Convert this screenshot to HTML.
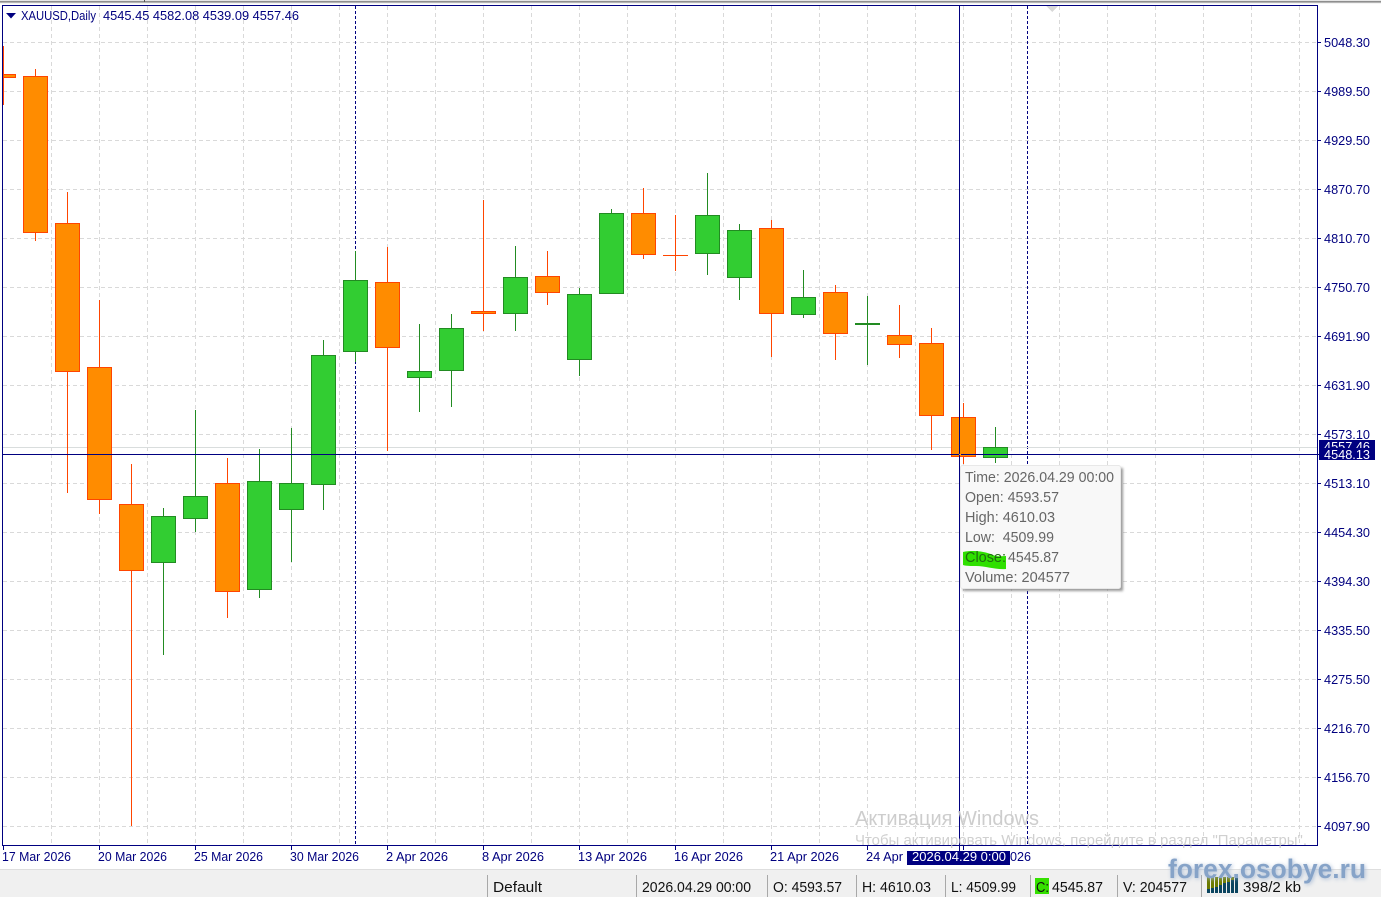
<!DOCTYPE html>
<html>
<head>
<meta charset="utf-8">
<title>XAUUSD,Daily</title>
<style>
html,body{margin:0;padding:0;background:#fff;width:1381px;height:897px;overflow:hidden}
svg{display:block;position:absolute;left:0;top:0}
text{font-family:"Liberation Sans",sans-serif;white-space:pre}
.ax{font-size:13px;fill:#00007f}
.st{font-size:15px;fill:#111}
.tt{font-size:15px;fill:#666}
.grid path{stroke:#d9d9d9;stroke-width:1;fill:none;stroke-dasharray:4 3}
.o rect{fill:#ff8c00;stroke:#ff4500}
.g rect{fill:#32cd32;stroke:#228b22}
.o path{stroke:#ff4500;fill:none}
.g path{stroke:#228b22;fill:none}
.crisp{shape-rendering:crispEdges}
</style>
</head>
<body>
<svg width="1381" height="897" viewBox="0 0 1381 897" xmlns="http://www.w3.org/2000/svg">
<defs>
<filter id="wm" x="-5%" y="-40%" width="110%" height="180%">
<feGaussianBlur in="SourceAlpha" stdDeviation="2" result="b"/>
<feFlood flood-color="#a9bcd6" flood-opacity="1"/>
<feComposite in2="b" operator="in" result="s"/>
<feOffset in="s" dx="1" dy="1" result="so"/>
<feMerge><feMergeNode in="so"/><feMergeNode in="SourceGraphic"/></feMerge>
</filter>
<filter id="ts" x="-5%" y="-5%" width="115%" height="115%">
<feGaussianBlur stdDeviation="1.2"/>
</filter>
</defs>

<!-- top band -->
<g class="crisp">
<rect x="0" y="0" width="1381" height="1" fill="#e6e6e6"/>
<rect x="0" y="1" width="1381" height="1" fill="#8e8e8e"/>
<rect x="0" y="2" width="1381" height="1" fill="#b4b4b4"/>
<rect x="0" y="3" width="1381" height="1" fill="#f4f4f4"/>
<rect x="144" y="0" width="1" height="2" fill="#555"/>

<!-- grid -->
<g class="grid">
<path d="M3 42.5H1317M3 91.5H1317M3 140.5H1317M3 189.5H1317M3 238.5H1317M3 287.5H1317M3 336.5H1317M3 385.5H1317M3 434.5H1317M3 483.5H1317M3 532.5H1317M3 581.5H1317M3 630.5H1317M3 679.5H1317M3 728.5H1317M3 777.5H1317M3 826.5H1317"/>
<path d="M51.5 6V845M99.5 6V845M147.5 6V845M195.5 6V845M243.5 6V845M291.5 6V845M339.5 6V845M387.5 6V845M435.5 6V845M483.5 6V845M531.5 6V845M579.5 6V845M627.5 6V845M675.5 6V845M723.5 6V845M771.5 6V845M819.5 6V845M867.5 6V845M915.5 6V845M963.5 6V845M1011.5 6V845M1059.5 6V845M1107.5 6V845M1155.5 6V845M1203.5 6V845M1251.5 6V845M1299.5 6V845"/>
</g>

<!-- period separators -->
<path d="M355.5 6V845M1027.5 6V845" stroke="#000080" stroke-dasharray="3 2" fill="none"/>

<!-- chart shift triangle -->
<polygon points="1046,6 1058,6 1052,12" fill="#d8d8d8"/>

<!-- ask/bid line -->
<rect x="3" y="447" width="1314" height="1" fill="#d9dddd"/>

<!-- bearish candles -->
<g class="o">
<path d="M3.5 46V105M35.5 69V241M67.5 192V493M99.5 300V514M131.5 464V826M227.5 458V618M387.5 247V451M483.5 200V331M547.5 251V305M643.5 188V259M675.5 215V271M771.5 220V357M835.5 285V360M899.5 305V358M931.5 328V450M963.5 403V464"/>
<rect x="3.5" y="74.5" width="12" height="3"/>
<rect x="23.5" y="76.5" width="24" height="156"/>
<rect x="55.5" y="223.5" width="24" height="148"/>
<rect x="87.5" y="367.5" width="24" height="132"/>
<rect x="119.5" y="504.5" width="24" height="66"/>
<rect x="215.5" y="483.5" width="24" height="108"/>
<rect x="375.5" y="282.5" width="24" height="65"/>
<rect x="471.5" y="311.5" width="24" height="2"/>
<rect x="535.5" y="276.5" width="24" height="16"/>
<rect x="631.5" y="213.5" width="24" height="41"/>
<path d="M663 255.5H688"/>
<rect x="759.5" y="228.5" width="24" height="85"/>
<rect x="823.5" y="292.5" width="24" height="41"/>
<rect x="887.5" y="335.5" width="24" height="9"/>
<rect x="919.5" y="343.5" width="24" height="72"/>
<rect x="951.5" y="417.5" width="24" height="39"/>
</g>

<!-- bullish candles -->
<g class="g">
<path d="M163.5 508V655M195.5 410V532M259.5 449V598M291.5 428V562M323.5 340V510M355.5 251V362M419.5 324V412M451.5 314V407M515.5 246V331M579.5 288V376M611.5 209V293M707.5 173V275M739.5 224V300M803.5 270V318M867.5 296V365M995.5 427V463"/>
<rect x="151.5" y="516.5" width="24" height="46"/>
<rect x="183.5" y="496.5" width="24" height="22"/>
<rect x="247.5" y="481.5" width="24" height="108"/>
<rect x="279.5" y="483.5" width="24" height="26"/>
<rect x="311.5" y="355.5" width="24" height="129"/>
<rect x="343.5" y="280.5" width="24" height="71"/>
<rect x="407.5" y="371.5" width="24" height="6"/>
<rect x="439.5" y="328.5" width="24" height="42"/>
<rect x="503.5" y="277.5" width="24" height="36"/>
<rect x="567.5" y="294.5" width="24" height="65"/>
<rect x="599.5" y="213.5" width="24" height="80"/>
<rect x="695.5" y="215.5" width="24" height="38"/>
<rect x="727.5" y="230.5" width="24" height="47"/>
<rect x="791.5" y="297.5" width="24" height="17"/>
<path d="M855 323.5H880M855 324.5H880"/>
<rect x="983.5" y="447.5" width="24" height="10"/>
</g>

<!-- crosshair -->
<path d="M959.5 6V851M3 454.5H1319" stroke="#000080" fill="none"/>
<rect x="959" y="454" width="2" height="1" fill="#ff9a20"/>

<!-- frame -->
<path d="M2.5 5.5H1317.5V845.5H2.5Z" stroke="#000080" fill="none"/>
<!-- price ticks -->
<path d="M1318 42.5h3M1318 91.5h3M1318 140.5h3M1318 189.5h3M1318 238.5h3M1318 287.5h3M1318 336.5h3M1318 385.5h3M1318 434.5h3M1318 483.5h3M1318 532.5h3M1318 581.5h3M1318 630.5h3M1318 679.5h3M1318 728.5h3M1318 777.5h3M1318 826.5h3" stroke="#000080" fill="none"/>
<!-- time ticks -->
<path d="M3.5 846v4M99.5 846v4M195.5 846v4M291.5 846v4M387.5 846v4M483.5 846v4M579.5 846v4M675.5 846v4M771.5 846v4M867.5 846v4M963.5 846v4" stroke="#000080" fill="none"/>

<!-- status bar -->
<rect x="0" y="869" width="1381" height="1" fill="#dedede"/>
<rect x="0" y="870" width="1381" height="27" fill="#f0f0f0"/>
<path d="M487.5 875V897M636.5 875V897M767.5 875V897M856.5 875V897M945.5 875V897M1030.5 875V897M1117.5 875V897M1201.5 875V897" stroke="#a8a8a8" fill="none"/>
<rect x="1035" y="878" width="14" height="16" fill="#35e000"/>
<!-- status icon -->
<g fill="#6b7a00">
<rect x="1207" y="877" width="3" height="12"/><rect x="1211" y="877" width="3" height="11"/><rect x="1215" y="877" width="3" height="10"/><rect x="1219" y="877" width="3" height="8"/><rect x="1223" y="877" width="3" height="6"/><rect x="1227" y="877" width="3" height="5"/><rect x="1231" y="877" width="3" height="3"/><rect x="1235" y="877" width="3" height="1"/>
</g>
<g fill="#0b4560">
<rect x="1207" y="889" width="3" height="4"/><rect x="1211" y="888" width="3" height="5"/><rect x="1215" y="887" width="3" height="6"/><rect x="1219" y="885" width="3" height="8"/><rect x="1223" y="883" width="3" height="10"/><rect x="1227" y="882" width="3" height="11"/><rect x="1231" y="880" width="3" height="13"/><rect x="1235" y="878" width="3" height="15"/>
</g>
</g>

<!-- header -->
<polygon points="6,13 16,13 11,18.5" fill="#000080"/>
<text x="21" y="20" class="ax" textLength="75" lengthAdjust="spacingAndGlyphs">XAUUSD,Daily</text>
<text x="103" y="20" class="ax" textLength="196" lengthAdjust="spacingAndGlyphs">4545.45 4582.08 4539.09 4557.46</text>

<!-- price labels -->
<g class="ax">
<text x="1324" y="47" textLength="46" lengthAdjust="spacingAndGlyphs">5048.30</text>
<text x="1324" y="96" textLength="46" lengthAdjust="spacingAndGlyphs">4989.50</text>
<text x="1324" y="145" textLength="46" lengthAdjust="spacingAndGlyphs">4929.50</text>
<text x="1324" y="194" textLength="46" lengthAdjust="spacingAndGlyphs">4870.70</text>
<text x="1324" y="243" textLength="46" lengthAdjust="spacingAndGlyphs">4810.70</text>
<text x="1324" y="292" textLength="46" lengthAdjust="spacingAndGlyphs">4750.70</text>
<text x="1324" y="341" textLength="46" lengthAdjust="spacingAndGlyphs">4691.90</text>
<text x="1324" y="390" textLength="46" lengthAdjust="spacingAndGlyphs">4631.90</text>
<text x="1324" y="439" textLength="46" lengthAdjust="spacingAndGlyphs">4573.10</text>
<text x="1324" y="488" textLength="46" lengthAdjust="spacingAndGlyphs">4513.10</text>
<text x="1324" y="537" textLength="46" lengthAdjust="spacingAndGlyphs">4454.30</text>
<text x="1324" y="586" textLength="46" lengthAdjust="spacingAndGlyphs">4394.30</text>
<text x="1324" y="635" textLength="46" lengthAdjust="spacingAndGlyphs">4335.50</text>
<text x="1324" y="684" textLength="46" lengthAdjust="spacingAndGlyphs">4275.50</text>
<text x="1324" y="733" textLength="46" lengthAdjust="spacingAndGlyphs">4216.70</text>
<text x="1324" y="782" textLength="46" lengthAdjust="spacingAndGlyphs">4156.70</text>
<text x="1324" y="831" textLength="46" lengthAdjust="spacingAndGlyphs">4097.90</text>
</g>
<!-- price highlight -->
<rect x="1319" y="440" width="56" height="20" fill="#000080" class="crisp"/>
<svg x="1319" y="440" width="56" height="8" viewBox="1319 440 56 8"><text x="1324" y="451" style="font-size:13px;fill:#fff" textLength="46" lengthAdjust="spacingAndGlyphs">4557.46</text></svg>
<text x="1324" y="459" style="font-size:13px;fill:#fff" textLength="46" lengthAdjust="spacingAndGlyphs">4548.13</text>

<!-- date labels -->
<g class="ax">
<text x="2" y="861" textLength="69" lengthAdjust="spacingAndGlyphs">17 Mar 2026</text>
<text x="98" y="861" textLength="69" lengthAdjust="spacingAndGlyphs">20 Mar 2026</text>
<text x="194" y="861" textLength="69" lengthAdjust="spacingAndGlyphs">25 Mar 2026</text>
<text x="290" y="861" textLength="69" lengthAdjust="spacingAndGlyphs">30 Mar 2026</text>
<text x="386" y="861" textLength="62" lengthAdjust="spacingAndGlyphs">2 Apr 2026</text>
<text x="482" y="861" textLength="62" lengthAdjust="spacingAndGlyphs">8 Apr 2026</text>
<text x="578" y="861" textLength="69" lengthAdjust="spacingAndGlyphs">13 Apr 2026</text>
<text x="674" y="861" textLength="69" lengthAdjust="spacingAndGlyphs">16 Apr 2026</text>
<text x="770" y="861" textLength="69" lengthAdjust="spacingAndGlyphs">21 Apr 2026</text>
<text x="866" y="861" textLength="37" lengthAdjust="spacingAndGlyphs">24 Apr</text>
<text x="1010" y="861" textLength="21" lengthAdjust="spacingAndGlyphs">026</text>
</g>
<rect x="907" y="851" width="103" height="14" fill="#000080" class="crisp"/>
<text x="912" y="861" style="font-size:13px;fill:#fff" textLength="94" lengthAdjust="spacingAndGlyphs">2026.04.29 0:00</text>

<!-- tooltip -->
<rect x="963" y="468" width="160" height="123" fill="#777" opacity=".75" filter="url(#ts)"/>
<rect x="960.5" y="465.5" width="160" height="123" rx="2" fill="#f8f8f8" stroke="#e8e8e8"/>
<path d="M963 552C972 550 984 551 993 555C998 557 1002 556 1006 556L1006 569C996 570 986 566 976 566C971 566 966 566 963 565Z" fill="#2fe000"/>
<text x="965" y="482" class="tt" textLength="149" lengthAdjust="spacingAndGlyphs">Time: 2026.04.29 00:00</text>
<text x="965" y="502" class="tt" textLength="94" lengthAdjust="spacingAndGlyphs">Open: 4593.57</text>
<text x="965" y="522" class="tt" textLength="90" lengthAdjust="spacingAndGlyphs">High: 4610.03</text>
<text x="965" y="542" class="tt" textLength="89" lengthAdjust="spacingAndGlyphs">Low:  4509.99</text>
<text x="965" y="562" class="tt" textLength="41" lengthAdjust="spacingAndGlyphs" style="fill:#1f6a10">Close:</text>
<text x="1008" y="562" class="tt" textLength="51" lengthAdjust="spacingAndGlyphs">4545.87</text>
<text x="965" y="582" class="tt" textLength="105" lengthAdjust="spacingAndGlyphs">Volume: 204577</text>

<!-- activation watermark -->
<text x="855" y="825" style="font-size:20px;fill:#c4c4c4;fill-opacity:.85" textLength="184" lengthAdjust="spacingAndGlyphs">Активация Windows</text>
<text x="855" y="845" style="font-size:14.5px;fill:#c4c4c4;fill-opacity:.8" textLength="452" lengthAdjust="spacingAndGlyphs">Чтобы активировать Windows, перейдите в раздел "Параметры".</text>

<!-- status text -->
<text x="493" y="892" class="st" textLength="49" lengthAdjust="spacingAndGlyphs">Default</text>
<text x="642" y="892" class="st" textLength="109" lengthAdjust="spacingAndGlyphs">2026.04.29 00:00</text>
<text x="773" y="892" class="st" textLength="69" lengthAdjust="spacingAndGlyphs">O: 4593.57</text>
<text x="862" y="892" class="st" textLength="69" lengthAdjust="spacingAndGlyphs">H: 4610.03</text>
<text x="951" y="892" class="st" textLength="65" lengthAdjust="spacingAndGlyphs">L: 4509.99</text>
<text x="1036" y="892" class="st" textLength="13" lengthAdjust="spacingAndGlyphs">C:</text>
<text x="1052" y="892" class="st" textLength="51" lengthAdjust="spacingAndGlyphs">4545.87</text>
<text x="1123" y="892" class="st" textLength="64" lengthAdjust="spacingAndGlyphs">V: 204577</text>
<text x="1243" y="892" class="st" textLength="58" lengthAdjust="spacingAndGlyphs">398/2 kb</text>

<!-- site watermark -->
<text x="1168" y="878" filter="url(#wm)" style="font-size:27px;font-weight:bold;fill:#86a3c8" textLength="198" lengthAdjust="spacingAndGlyphs">forex.osobye.ru</text>
</svg>
</body>
</html>
